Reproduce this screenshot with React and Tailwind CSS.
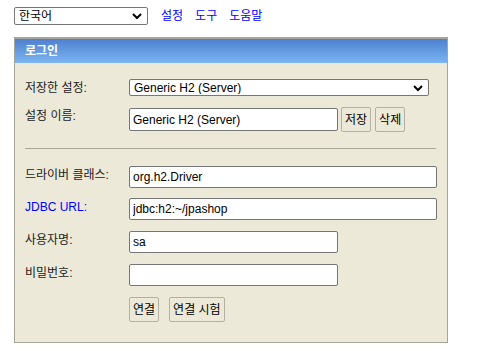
import React from "react";

const font = { fontFamily: '"Liberation Sans", Arial, "Noto Sans CJK KR", sans-serif' };

const Chevron = () => (
  <svg width="10" height="7" viewBox="0 0 10 7" className="absolute right-[6px] top-1/2 -translate-y-1/2 pointer-events-none">
    <path d="M1 1.5 L5 5.5 L9 1.5" fill="none" stroke="#000" strokeWidth="2" />
  </svg>
);

function Select({ value, className }) {
  return (
    <div className={"relative " + className}>
      <select
        defaultValue={value}
        className="block appearance-none w-full h-full bg-white border border-[#767676] rounded-[2px] pl-[4px] text-[12px] leading-none text-black outline-none"
      >
        <option>{value}</option>
      </select>
      <Chevron />
    </div>
  );
}

function Input({ value, className }) {
  return (
    <input
      defaultValue={value}
      className={"block bg-white border border-[#767676] rounded-[2px] px-[3px] text-[12px] text-black outline-none " + className}
    />
  );
}

function Btn({ children, className }) {
  return (
    <button className={"h-[25px] whitespace-nowrap border border-[#b3b0a3] rounded-[2px] bg-[#ece9d8] px-[3px] text-[12px] text-black " + className}>
      {children}
    </button>
  );
}

function Label({ children, blue }) {
  return (
    <div className={"w-[104px] shrink-0 text-[12px] leading-none pt-[3px] " + (blue ? "text-[#0000ff]" : "text-[#1a1a1a]")}>
      {children}
    </div>
  );
}

export default function App() {
  return (
    <div className="w-[484px] h-[358px] bg-white" style={font}>
      <div className="flex items-center h-[18px] mt-[7px] pl-[14px]">
        <Select value="한국어" className="w-[134px] h-[18px]" />
        <div className="flex gap-[12px] ml-[13px] text-[12px] leading-none text-[#0000ff]">
          <span>설정</span>
          <span>도구</span>
          <span>도움말</span>
        </div>
      </div>

      <div className="ml-[14px] mt-[12px] w-[434px] h-[306px] border border-t-2 border-[#a7a597] bg-[#ece9d8]">
        <div className="h-[24px] bg-gradient-to-b from-[#4f80cf] to-[#7cb5f1] flex items-center pl-[10px] text-[12px] font-bold text-white">
          로그인
        </div>

        <div className="pl-[10px] pt-[16px]">
          <div className="flex items-start h-[17px]">
            <Label>저장한 설정:</Label>
            <Select value="Generic H2 (Server)" className="w-[300px] h-[17px]" />
          </div>

          <div className="flex items-start mt-[11px]">
            <Label>설정 이름:</Label>
            <Input value="Generic H2 (Server)" className="w-[209px] h-[23px] mt-[1px]" />
            <Btn className="ml-[3px]">저장</Btn>
            <Btn className="ml-[4px]">삭제</Btn>
          </div>

          <div className="mt-[16px] mr-[11px] h-px bg-[#a8a697]" />

          <div className="flex items-start mt-[17px]">
            <Label>드라이버 클래스:</Label>
            <Input value="org.h2.Driver" className="w-[308px] h-[22px]" />
          </div>
          <div className="flex items-start mt-[10px]">
            <Label blue>JDBC URL:</Label>
            <Input value="jdbc:h2:~/jpashop" className="w-[308px] h-[22px]" />
          </div>
          <div className="flex items-start mt-[11px]">
            <Label>사용자명:</Label>
            <Input value="sa" className="w-[209px] h-[22px]" />
          </div>
          <div className="flex items-start mt-[11px]">
            <Label>비밀번호:</Label>
            <Input value="" className="w-[209px] h-[22px]" />
          </div>
          <div className="flex items-start mt-[11px] pl-[104px]">
            <Btn>연결</Btn>
            <Btn className="ml-[10px]">연결 시험</Btn>
          </div>
        </div>
      </div>
    </div>
  );
}
